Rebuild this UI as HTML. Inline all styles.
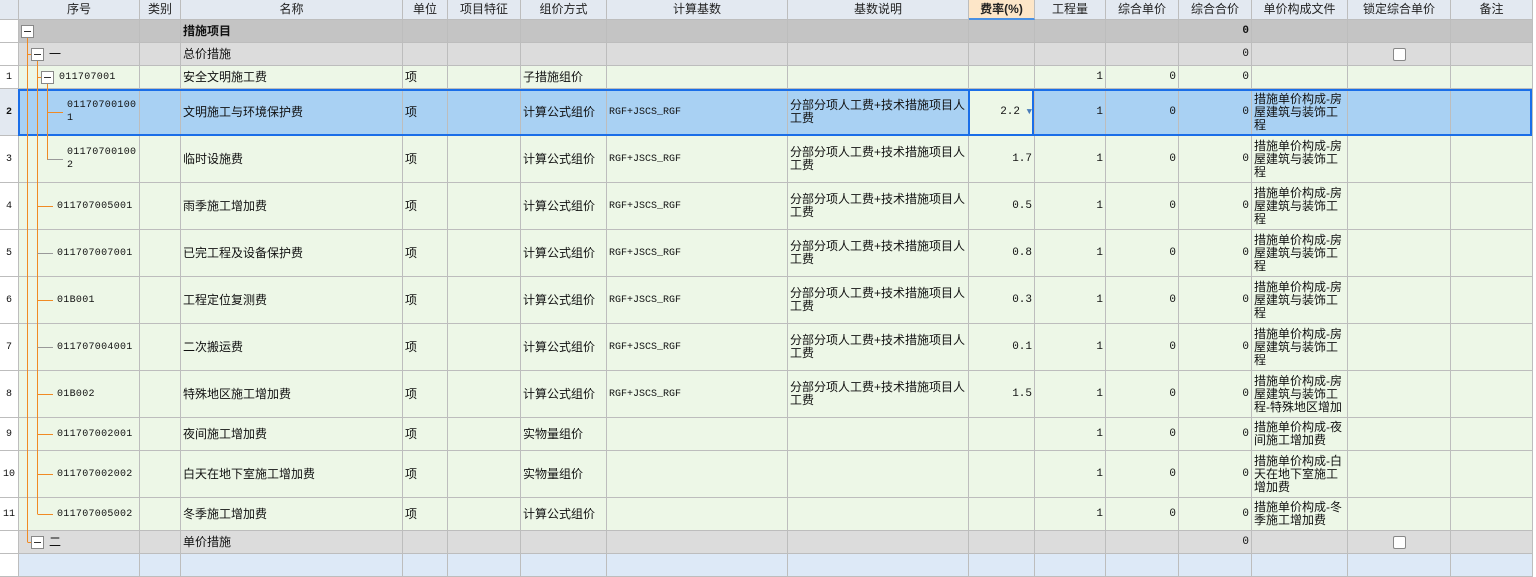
<!DOCTYPE html>
<html><head><meta charset="utf-8"><style>
body{margin:0;width:1536px;height:558px;overflow:hidden;background:#fff;font-family:"Liberation Sans","Noto Sans CJK SC",sans-serif;font-size:12px;color:#111;position:relative}
.row{position:absolute;left:0;width:1533px;display:flex}
.row>div{box-sizing:border-box;border-right:1px solid #bdbdbd;border-bottom:1px solid #bdbdbd;height:100%;display:flex;align-items:center;padding:0 2px;overflow:hidden;white-space:nowrap;line-height:13px;flex:none}
.row>div:nth-child(1){width:19px;background:#fff;justify-content:center;padding:0;font-family:"Liberation Mono",monospace;font-size:10px}
.row>div:nth-child(2){width:121px}.row>div:nth-child(3){width:41px}.row>div:nth-child(4){width:222px}.row>div:nth-child(5){width:45px}.row>div:nth-child(6){width:73px}.row>div:nth-child(7){width:86px}.row>div:nth-child(8){width:181px}.row>div:nth-child(9){width:181px}.row>div:nth-child(10){width:66px}.row>div:nth-child(11){width:71px}.row>div:nth-child(12){width:73px}.row>div:nth-child(13){width:73px}.row>div:nth-child(14){width:96px}.row>div:nth-child(15){width:103px}.row>div:nth-child(16){width:82px}
.h>div{background:#e3e9f1;justify-content:center;color:#222}
.h>div:nth-child(1){background:#e3e9f1}
.g1>div{background:#c4c4c4}
.g2>div{background:#dcdcdc}
.n>div{background:#edf7e7}
.s>div{background:#a9d1f3}
.b>div{background:#dde9f7}
.row>div.r{justify-content:flex-end;font-family:"Liberation Mono",monospace;font-size:11px}
.row>div.w{white-space:normal}
.row>div.m{font-family:"Liberation Mono",monospace;font-size:10px}
.row>div.c{padding-left:48px;font-family:"Liberation Mono",monospace;font-size:10px;letter-spacing:0.3px;white-space:normal}
.row>div.c2{padding-left:38px;font-family:"Liberation Mono",monospace;font-size:10px;letter-spacing:0.3px}
.row>div.cc{justify-content:center}
.cb{display:inline-block;width:11px;height:11px;border:1px solid #888;background:#fff;border-radius:2px}
</style></head><body>
<div class="row h" style="top:0;height:20px"><div></div><div>序号</div><div>类别</div><div>名称</div><div>单位</div><div>项目特征</div><div>组价方式</div><div>计算基数</div><div>基数说明</div><div style="background:#fde6c8;font-weight:bold;border-bottom:2px solid #4a90e2">费率(%)</div><div>工程量</div><div>综合单价</div><div>综合合价</div><div>单价构成文件</div><div>锁定综合单价</div><div>备注</div></div>
<div class="row g1" style="top:20px;height:23px"><div></div><div></div><div></div><div style="font-weight:bold">措施项目</div><div></div><div></div><div></div><div></div><div></div><div></div><div></div><div></div><div class="r" style="font-weight:bold">0</div><div></div><div></div><div></div></div>
<div class="row g2" style="top:43px;height:23px"><div></div><div style="padding-left:30px">一</div><div></div><div>总价措施</div><div></div><div></div><div></div><div></div><div></div><div></div><div></div><div></div><div class="r">0</div><div></div><div class="cc"><span class="cb"></span></div><div></div></div>
<div class="row n" style="top:66px;height:23px"><div>1</div><div class="c2" style="padding-left:40px">011707001</div><div></div><div>安全文明施工费</div><div>项</div><div></div><div>子措施组价</div><div></div><div></div><div></div><div class="r">1</div><div class="r">0</div><div class="r">0</div><div></div><div></div><div></div></div>
<div class="row s" style="top:89px;height:47px"><div style="font-weight:bold;background:#e3e9f1">2</div><div class="c">01170700100 1</div><div></div><div>文明施工与环境保护费</div><div>项</div><div></div><div>计算公式组价</div><div class="m">RGF+JSCS_RGF</div><div class="w">分部分项人工费+技术措施项目人工费</div><div class="r" style="background:#edf7e7">2.2&nbsp;<span style="color:#4a7cb8;font-size:9px">▼</span></div><div class="r">1</div><div class="r">0</div><div class="r">0</div><div class="w">措施单价构成-房屋建筑与装饰工程</div><div></div><div></div></div>
<div class="row n" style="top:136px;height:47px"><div>3</div><div class="c">01170700100 2</div><div></div><div>临时设施费</div><div>项</div><div></div><div>计算公式组价</div><div class="m">RGF+JSCS_RGF</div><div class="w">分部分项人工费+技术措施项目人工费</div><div class="r">1.7</div><div class="r">1</div><div class="r">0</div><div class="r">0</div><div class="w">措施单价构成-房屋建筑与装饰工程</div><div></div><div></div></div>
<div class="row n" style="top:183px;height:47px"><div>4</div><div class="c2">011707005001</div><div></div><div>雨季施工增加费</div><div>项</div><div></div><div>计算公式组价</div><div class="m">RGF+JSCS_RGF</div><div class="w">分部分项人工费+技术措施项目人工费</div><div class="r">0.5</div><div class="r">1</div><div class="r">0</div><div class="r">0</div><div class="w">措施单价构成-房屋建筑与装饰工程</div><div></div><div></div></div>
<div class="row n" style="top:230px;height:47px"><div>5</div><div class="c2">011707007001</div><div></div><div>已完工程及设备保护费</div><div>项</div><div></div><div>计算公式组价</div><div class="m">RGF+JSCS_RGF</div><div class="w">分部分项人工费+技术措施项目人工费</div><div class="r">0.8</div><div class="r">1</div><div class="r">0</div><div class="r">0</div><div class="w">措施单价构成-房屋建筑与装饰工程</div><div></div><div></div></div>
<div class="row n" style="top:277px;height:47px"><div>6</div><div class="c2">01B001</div><div></div><div>工程定位复测费</div><div>项</div><div></div><div>计算公式组价</div><div class="m">RGF+JSCS_RGF</div><div class="w">分部分项人工费+技术措施项目人工费</div><div class="r">0.3</div><div class="r">1</div><div class="r">0</div><div class="r">0</div><div class="w">措施单价构成-房屋建筑与装饰工程</div><div></div><div></div></div>
<div class="row n" style="top:324px;height:47px"><div>7</div><div class="c2">011707004001</div><div></div><div>二次搬运费</div><div>项</div><div></div><div>计算公式组价</div><div class="m">RGF+JSCS_RGF</div><div class="w">分部分项人工费+技术措施项目人工费</div><div class="r">0.1</div><div class="r">1</div><div class="r">0</div><div class="r">0</div><div class="w">措施单价构成-房屋建筑与装饰工程</div><div></div><div></div></div>
<div class="row n" style="top:371px;height:47px"><div>8</div><div class="c2">01B002</div><div></div><div>特殊地区施工增加费</div><div>项</div><div></div><div>计算公式组价</div><div class="m">RGF+JSCS_RGF</div><div class="w">分部分项人工费+技术措施项目人工费</div><div class="r">1.5</div><div class="r">1</div><div class="r">0</div><div class="r">0</div><div class="w">措施单价构成-房屋建筑与装饰工程-特殊地区增加</div><div></div><div></div></div>
<div class="row n" style="top:418px;height:33px"><div>9</div><div class="c2">011707002001</div><div></div><div>夜间施工增加费</div><div>项</div><div></div><div>实物量组价</div><div></div><div></div><div></div><div class="r">1</div><div class="r">0</div><div class="r">0</div><div class="w">措施单价构成-夜间施工增加费</div><div></div><div></div></div>
<div class="row n" style="top:451px;height:47px"><div>10</div><div class="c2">011707002002</div><div></div><div>白天在地下室施工增加费</div><div>项</div><div></div><div>实物量组价</div><div></div><div></div><div></div><div class="r">1</div><div class="r">0</div><div class="r">0</div><div class="w">措施单价构成-白天在地下室施工增加费</div><div></div><div></div></div>
<div class="row n" style="top:498px;height:33px"><div>11</div><div class="c2">011707005002</div><div></div><div>冬季施工增加费</div><div>项</div><div></div><div>计算公式组价</div><div></div><div></div><div></div><div class="r">1</div><div class="r">0</div><div class="r">0</div><div class="w">措施单价构成-冬季施工增加费</div><div></div><div></div></div>
<div class="row g2" style="top:531px;height:23px"><div></div><div style="padding-left:30px">二</div><div></div><div>单价措施</div><div></div><div></div><div></div><div></div><div></div><div></div><div></div><div></div><div class="r">0</div><div></div><div class="cc"><span class="cb"></span></div><div></div></div>
<div class="row b" style="top:554px;height:23px"><div></div><div></div><div></div><div></div><div></div><div></div><div></div><div></div><div></div><div></div><div></div><div></div><div></div><div></div><div></div><div></div></div>
<div style="position:absolute;left:18px;top:89px;width:1510px;height:43px;border:2px solid #1a6ee8;pointer-events:none"></div>
<div style="position:absolute;left:968px;top:89px;width:62px;height:43px;border:2px solid #1a6ee8;pointer-events:none"></div>
<svg style="position:absolute;left:0;top:0" width="1536" height="558">
<g stroke="#f08a24" stroke-width="1" fill="none">
<line x1="27.5" y1="37" x2="27.5" y2="542"/>
<line x1="27.5" y1="542.5" x2="32" y2="542.5"/>
<line x1="27.5" y1="54.5" x2="32" y2="54.5"/>
<line x1="37.5" y1="60" x2="37.5" y2="514"/>
<line x1="37.5" y1="77.5" x2="42" y2="77.5"/>
<line x1="47.5" y1="83" x2="47.5" y2="160"/>
<line x1="47.5" y1="112.5" x2="63" y2="112.5"/>
<line x1="47.5" y1="159.5" x2="63" y2="159.5" stroke="#999"/>
<line x1="37.5" y1="206.5" x2="53" y2="206.5"/>
<line x1="37.5" y1="253.5" x2="53" y2="253.5" stroke="#999"/>
<line x1="37.5" y1="300.5" x2="53" y2="300.5"/>
<line x1="37.5" y1="347.5" x2="53" y2="347.5" stroke="#999"/>
<line x1="37.5" y1="394.5" x2="53" y2="394.5"/>
<line x1="37.5" y1="434.5" x2="53" y2="434.5"/>
<line x1="37.5" y1="474.5" x2="53" y2="474.5"/>
<line x1="37.5" y1="514.5" x2="53" y2="514.5"/>
</g>
<g fill="#fff" stroke="#888">
<rect x="21.5" y="25.5" width="12" height="12"/><rect x="31.5" y="48.5" width="12" height="12"/><rect x="41.5" y="71.5" width="12" height="12"/><rect x="31.5" y="536.5" width="12" height="12"/>
</g>
<g stroke="#333"><line x1="24" y1="31.5" x2="31" y2="31.5"/><line x1="34" y1="54.5" x2="41" y2="54.5"/><line x1="44" y1="77.5" x2="51" y2="77.5"/><line x1="34" y1="542.5" x2="41" y2="542.5"/></g>
</svg>
</body></html>
